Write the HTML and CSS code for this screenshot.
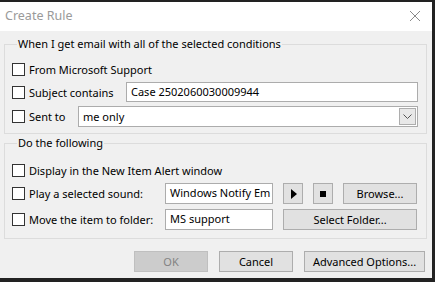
FILE: index.html
```html
<!DOCTYPE html>
<html lang="en">
<head>
    <meta charset="UTF-8">
    <title>Create Rule</title>
    <link rel="stylesheet" href="styles.css">
</head>
<body>
    <div class="dialog">
        <div class="titlebar">
            <span class="title">Create Rule</span>
            <svg class="close" width="12" height="12" viewBox="0 0 12 12">
                <path d="M1 1 L11 11 M11 1 L1 11" stroke="#8a8a8a" stroke-width="1" fill="none"/>
            </svg>
        </div>
        <div class="content">
            <fieldset class="group group-when">
                <legend>When I get email with all of the selected conditions</legend>
                <div class="row r1">
                    <span class="check"></span><span class="label">From Microsoft Support</span>
                </div>
                <div class="row r2">
                    <span class="check"></span><span class="label w-subject">Subject contains</span>
                    <div class="field grow">Case 2502060030009944</div>
                </div>
                <div class="row r3">
                    <span class="check"></span><span class="label w-sent">Sent to</span>
                    <div class="field grow combo">
                        <span>me only</span>
                        <span class="drop">
                            <svg width="9" height="6" viewBox="0 0 9 6"><path d="M0.5 0.5 L4.5 4.5 L8.5 0.5" stroke="#555" fill="none"/></svg>
                        </span>
                    </div>
                </div>
            </fieldset>

            <fieldset class="group group-do">
                <legend>Do the following</legend>
                <div class="row r1">
                    <span class="check"></span><span class="label">Display in the New Item Alert window</span>
                </div>
                <div class="row r2">
                    <span class="check"></span><span class="label w-do">Play a selected sound:</span>
                    <div class="field short">Windows Notify Em</div>
                    <button class="btn icon-btn"><span class="play"></span></button>
                    <button class="btn icon-btn stop-btn"><span class="stop"></span></button>
                    <button class="btn browse">Browse...</button>
                </div>
                <div class="row r3">
                    <span class="check"></span><span class="label w-do">Move the item to folder:</span>
                    <div class="field short">MS support</div>
                    <button class="btn folder">Select Folder...</button>
                </div>
            </fieldset>

            <div class="actions">
                <button class="btn disabled">OK</button>
                <button class="btn">Cancel</button>
                <button class="btn advanced">Advanced Options...</button>
            </div>
        </div>
    </div>
</body>
</html>
```

FILE: styles.css
```css
body {
    margin: 0;
    background: #222;
    font-family: "Noto Sans", "Open Sans", sans-serif;
    font-size: 11px;
    color: #000;
}
.dialog {
    width: 432px;
    height: 276px;
    margin-top: 2px;
    background: #f0f0f0;
    overflow: hidden;
}
.titlebar {
    height: 29px;
    background: #fff;
    display: flex;
    align-items: center;
    justify-content: space-between;
    padding: 0 11px 0 5px;
}
.title {
    font-size: 12.5px;
    color: #9a9a9a;
    margin-top: -2px;
}
.close {
    margin-top: -2px;
}
.content {
    padding: 5px 5px 0 4px;
}
.group {
    margin: 0;
    border: 1px solid #dcdcdc;
    padding: 7px 8px 6px 7px;
    min-width: 0;
}
.group legend {
    padding: 0 1px;
    margin-left: 5px;
    line-height: 16px;
    height: 16px;
}
.group-do {
    margin-top: 1px;
    padding-top: 9px;
    padding-bottom: 8px;
}
.row {
    display: flex;
    align-items: center;
    height: 20px;
}
.group-when .r2 { margin-top: 3px; }
.group-when .r3 { margin-top: 4px; height: 21px; }
.group-do .r2 { margin-top: 3px; height: 21px; }
.group-do .r3 { margin-top: 5px; height: 21px; }
.check {
    width: 11px;
    height: 11px;
    border: 1px solid #333;
    background: #fff;
    flex: none;
    margin-right: 4px;
}
.label {
    white-space: nowrap;
}
.w-subject { width: 97px; flex: none; }
.w-sent { width: 49px; flex: none; }
.w-do { width: 136px; flex: none; }
.field {
    box-sizing: border-box;
    height: 100%;
    background: #fff;
    border: 1px solid #acacac;
    padding: 0 4px;
    line-height: 18px;
    white-space: nowrap;
    overflow: hidden;
}
.grow {
    flex: 1;
}
.combo {
    display: flex;
    align-items: center;
    justify-content: space-between;
    padding-right: 1px;
}
.drop {
    box-sizing: border-box;
    width: 17px;
    height: 17px;
    border: 1px solid #adadad;
    background: #e8e8e8;
    display: flex;
    align-items: center;
    justify-content: center;
}
.short {
    width: 108px;
    flex: none;
}
.btn {
    box-sizing: border-box;
    height: 21px;
    border: 1px solid #adadad;
    background: #e1e1e1;
    font-family: inherit;
    font-size: 11px;
    color: #000;
    padding: 0;
    line-height: 18px;
}
.icon-btn {
    width: 20px;
    margin-left: 10px;
    display: flex;
    align-items: center;
    justify-content: center;
}
.stop-btn {
    margin-left: 10px;
}
.play {
    width: 0;
    height: 0;
    border-left: 6px solid #000;
    border-top: 5px solid transparent;
    border-bottom: 5px solid transparent;
    margin-left: 2px;
}
.stop {
    width: 6px;
    height: 6px;
    background: #000;
}
.browse {
    width: 74px;
    margin-left: 10px;
}
.folder {
    width: 134px;
    margin-left: 10px;
}
.actions {
    display: flex;
    justify-content: flex-end;
    gap: 11px;
    margin-top: 12px;
    padding-right: 2px;
}
.actions .btn {
    width: 74px;
}
.actions .advanced {
    width: 121px;
}
.btn.disabled {
    background: #cccccc;
    border-color: #bfbfbf;
    color: #838383;
}
```
